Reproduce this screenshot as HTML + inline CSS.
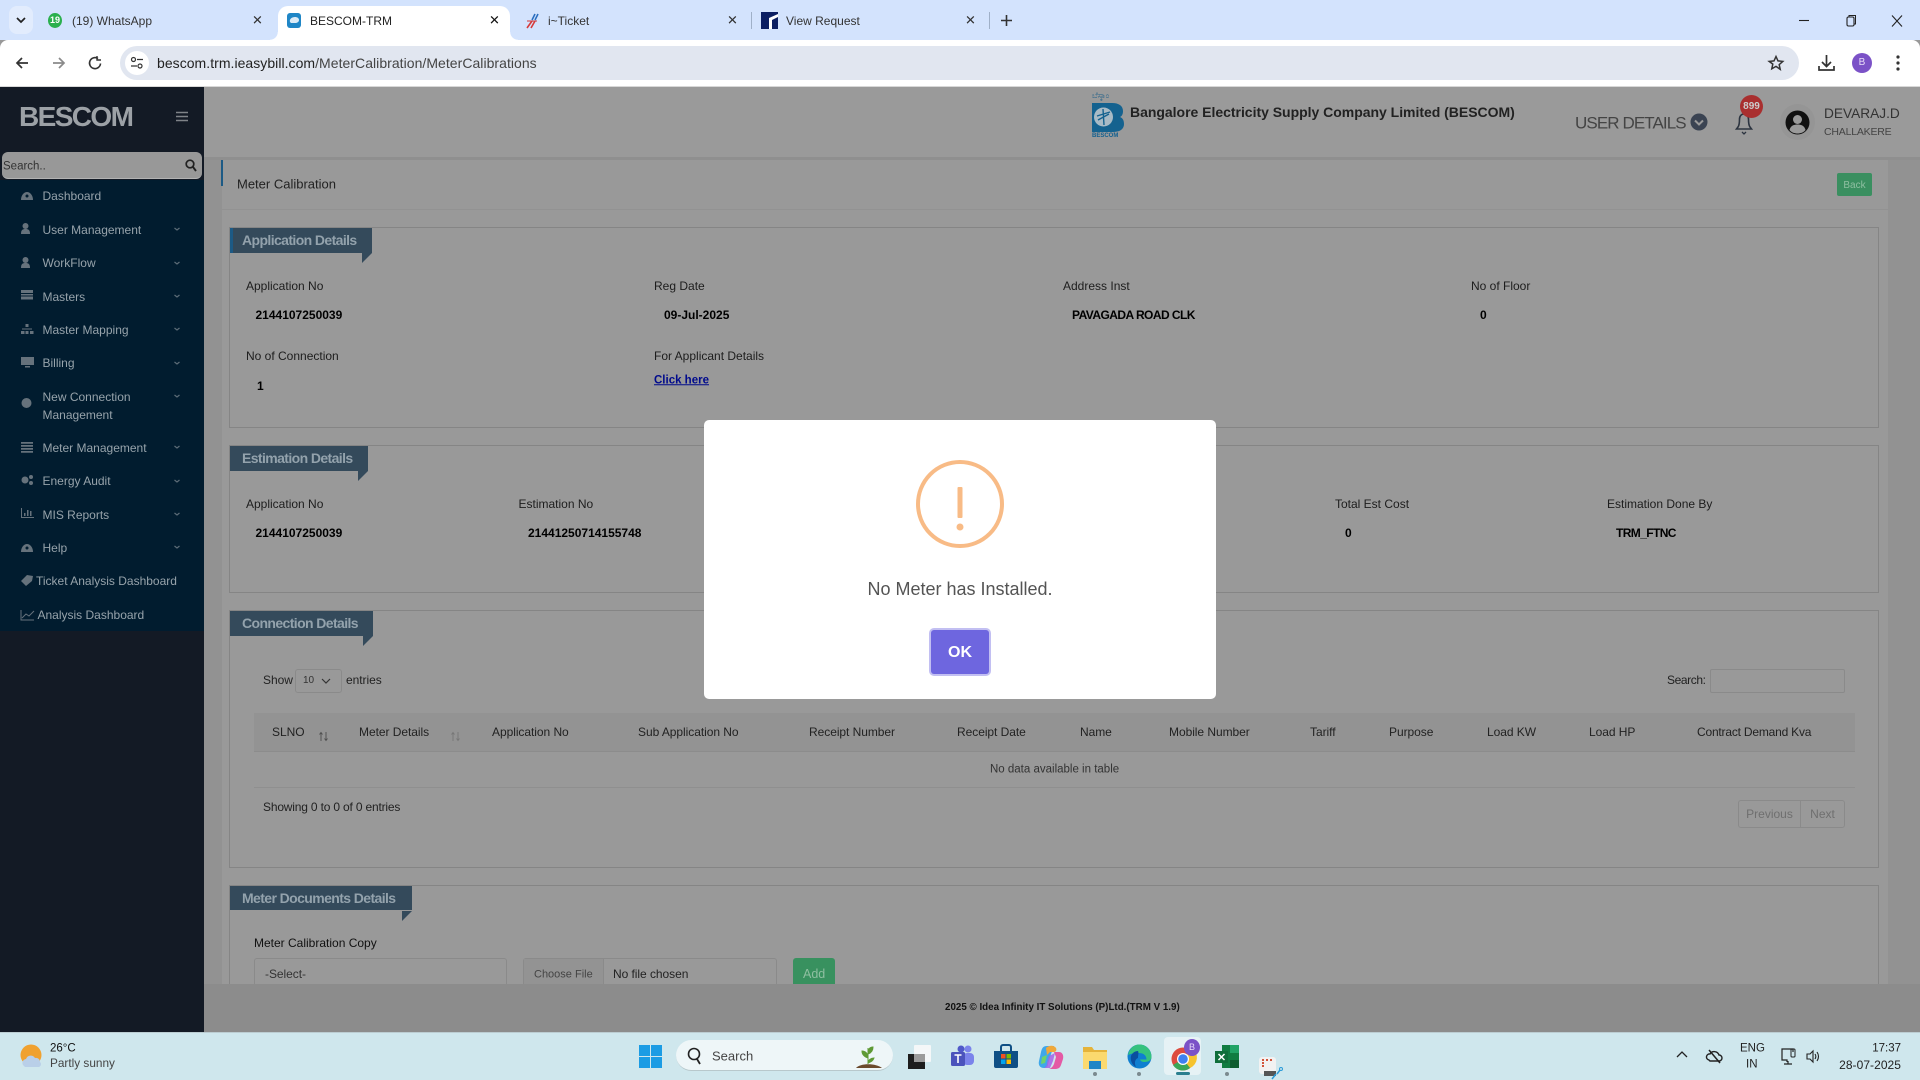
<!DOCTYPE html>
<html lang="en"><head><meta charset="utf-8"><title>BESCOM-TRM</title>
<style>
*{box-sizing:border-box}
html,body{margin:0;padding:0;width:1920px;height:1080px;overflow:hidden;background:#999;font-family:"Liberation Sans",sans-serif}
.b{position:absolute}
.t{position:absolute;white-space:nowrap;line-height:1;transform:translateY(-50%);font-size:12px;color:#1c1c1c}
svg{position:absolute;overflow:visible}
.tab{font-size:12px;color:#333}
.x{font-size:13px;color:#333}
.nav{font-size:12px;color:#97a3ab}
.lab{font-size:12px;color:#1d1d1d}
.val{font-size:12px;font-weight:bold;color:#000}
.card{position:absolute;left:229px;width:1650px;border:1px solid #858585}
.rib{position:absolute;left:230px;background:#344a5b}
.rt{position:absolute;white-space:nowrap;line-height:1;transform:translateY(-50%);font-size:14px;font-weight:bold;color:#93a2ac;letter-spacing:-.6px;left:242px}
.th{font-size:12px;color:#222;letter-spacing:-.05px}
.fold{position:absolute;width:0;height:0;border-style:solid;border-width:10px 10px 0 0;border-color:#344a5b transparent transparent transparent}
</style></head><body>

<!-- browser chrome -->
<div class="b" style="left:0;top:0;width:1920px;height:40px;background:#d3e3fd"></div>
<div class="b" style="left:9px;top:6px;width:24px;height:28px;background:#e2ecfd;border-radius:8px"></div>
<svg style="left:14px;top:16px" width="14" height="9"><path d="M3 2l4 4 4-4" fill="none" stroke="#222" stroke-width="1.7"/></svg>
<div class="b" style="left:48px;top:13px;width:14px;height:15px;border-radius:50%;background:#2bb04e;color:#fff;font-size:9px;font-weight:bold;line-height:15px;text-align:center">19</div>
<div class="t tab" style="left:72px;top:21px">(19) WhatsApp</div>
<div class="t x" style="left:252px;top:20px">✕</div>
<div class="b" style="left:278px;top:6px;width:232px;height:34px;background:#fff;border-radius:10px 10px 0 0"></div>
<div class="b" style="left:270px;top:32px;width:8px;height:8px;background:radial-gradient(circle at 0 0,#d3e3fd 7.5px,#fff 8px)"></div>
<div class="b" style="left:510px;top:32px;width:8px;height:8px;background:radial-gradient(circle at 100% 0,#d3e3fd 7.5px,#fff 8px)"></div>
<div class="b" style="left:287px;top:13px;width:14px;height:15px;background:#1f86c6;border-radius:3px"></div>
<svg style="left:288px;top:15px" width="12" height="10"><path d="M2 7c-1-3 2-5 5-5 2 0 4 1 4 3s-2 3-4 3H3z" fill="#dcebf6"/></svg>
<div class="t tab" style="left:310px;top:21px;color:#222">BESCOM-TRM</div>
<div class="t x" style="left:489px;top:20px;color:#111">✕</div>
<svg style="left:525px;top:13px" width="14" height="16"><path d="M10 1L7 7M13 1l-3 6" stroke="#2c6fc0" stroke-width="1.6" fill="none"/><path d="M7 8L2 15M10 8l-4 7" stroke="#d63a3a" stroke-width="1.6" fill="none"/><path d="M2 8h10" stroke="#d63a3a" stroke-width="1"/></svg>
<div class="t tab" style="left:548px;top:21px">i~Ticket</div>
<div class="t x" style="left:727px;top:20px">✕</div>
<div class="b" style="left:751px;top:12px;width:1px;height:17px;background:#9fb0c8"></div>
<svg style="left:761px;top:12px" width="17" height="17"><rect width="17" height="17" fill="#0c1f63"/><path d="M8 17V6l9-4v3l-6 3v9z" fill="#fff"/></svg>
<div class="t tab" style="left:786px;top:21px">View Request</div>
<div class="t x" style="left:965px;top:20px">✕</div>
<div class="b" style="left:989px;top:12px;width:1px;height:17px;background:#9fb0c8"></div>
<svg style="left:1000px;top:14px" width="13" height="13"><path d="M6.5 1v11M1 6.5h11" stroke="#333" stroke-width="1.6"/></svg>
<svg style="left:1798px;top:14px" width="110" height="14"><path d="M1 6.5h10" stroke="#222" stroke-width="1.1"/><rect x="49" y="3" width="7" height="9" rx="1.5" fill="none" stroke="#222" stroke-width="1.1"/><path d="M51 3V1.5h6.500V10H56" fill="none" stroke="#222" stroke-width="1"/><path d="M94 1.5l10 11M104 1.5l-10 11" stroke="#222" stroke-width="1.1"/></svg>

<div class="b" style="left:0;top:40px;width:1920px;height:47px;background:#fff;border-radius:8px 8px 0 0"></div>
<div class="b" style="left:0;top:86px;width:1920px;height:1px;background:#d8d8d8"></div>
<div class="b" style="left:120px;top:46px;width:1679px;height:34px;background:#e1e6f0;border-radius:17px"></div>
<svg style="left:14px;top:55px" width="100" height="16"><path d="M14 8H3M8 3L3 8l5 5" fill="none" stroke="#333" stroke-width="1.7"/><path d="M39 8h11M45 3l5 5-5 5" fill="none" stroke="#8a8a8a" stroke-width="1.7"/><path d="M84 3.500a5.500 5.500 0 1 0 2.500 5" fill="none" stroke="#333" stroke-width="1.6"/><path d="M83 1v4h4" fill="none" stroke="#333" stroke-width="1.4"/></svg>
<div class="b" style="left:125px;top:51px;width:24px;height:24px;background:#fff;border-radius:50%"></div>
<svg style="left:130px;top:56px" width="14" height="14"><circle cx="3.5" cy="3.5" r="2" fill="none" stroke="#333" stroke-width="1.2"/><path d="M7 3.5h6M1 10h6" stroke="#333" stroke-width="1.3"/><circle cx="10" cy="10" r="2" fill="none" stroke="#333" stroke-width="1.2"/></svg>
<div class="t" style="left:157px;top:63px;font-size:14px;color:#222;letter-spacing:.04px">bescom.trm.ieasybill.com<span style="color:#444">/MeterCalibration/MeterCalibrations</span></div>
<svg style="left:1768px;top:55px" width="16" height="16"><path d="M8 1.5l2 4.4 4.8.5-3.6 3.2 1 4.7L8 11.4l-4.200 2.400 1-4.700L1.200 6.400 6 5.900z" fill="none" stroke="#333" stroke-width="1.5"/></svg>
<svg style="left:1818px;top:54px" width="17" height="18"><path d="M8.500 1v11M4 8l4.500 4.500L13 8" fill="none" stroke="#333" stroke-width="1.7"/><path d="M1 12v4h15v-4" fill="none" stroke="#333" stroke-width="1.7"/></svg>
<div class="b" style="left:1852px;top:53px;width:20px;height:20px;border-radius:50%;background:#7b52c7;color:#e8dcf8;font-size:10px;line-height:20px;text-align:center">B</div>
<svg style="left:1896px;top:55px" width="4" height="16"><circle cx="2" cy="2" r="1.600" fill="#333"/><circle cx="2" cy="8" r="1.600" fill="#333"/><circle cx="2" cy="14" r="1.600" fill="#333"/></svg>

<!-- sidebar -->
<div class="b" style="left:0;top:87px;width:204px;height:945px;background:#131a25"></div>
<div class="b" style="left:0;top:180px;width:204px;height:451px;background:#011c2f"></div>
<div class="t" style="left:19px;top:117px;font-size:28px;font-weight:bold;color:#9ca1a6;letter-spacing:-1.600px">BESCOM</div>
<svg style="left:176px;top:111px" width="12" height="11"><path d="M0 1.500h12M0 5.500h12M0 9.500h12" stroke="#7f8388" stroke-width="1.600"/></svg>
<div class="b" style="left:2px;top:152px;width:200px;height:27px;background:#989898;border-radius:6px;border-bottom:1px solid #b3b3b3"></div>
<div class="t" style="left:3px;top:166px;font-size:11.500px;color:#333;margin-top:1px">Search..</div>
<svg style="left:185px;top:159px" width="12" height="13"><circle cx="5" cy="5" r="3.800" fill="none" stroke="#222" stroke-width="1.700"/><path d="M8 8l3 4" stroke="#222" stroke-width="1.900"/></svg>

<div class="t nav" style="left:42.500px;top:196px">Dashboard</div>
<div class="t nav" style="left:42.500px;top:230px">User Management</div>
<div class="t nav" style="left:42.500px;top:263px">WorkFlow</div>
<div class="t nav" style="left:42.500px;top:297px">Masters</div>
<div class="t nav" style="left:42.500px;top:330px">Master Mapping</div>
<div class="t nav" style="left:42.500px;top:363px">Billing</div>
<div class="t nav" style="left:42.500px;top:397px">New Connection</div>
<div class="t nav" style="left:42.500px;top:415px">Management</div>
<div class="t nav" style="left:42.500px;top:448px">Meter Management</div>
<div class="t nav" style="left:42.500px;top:481px">Energy Audit</div>
<div class="t nav" style="left:42.500px;top:515px">MIS Reports</div>
<div class="t nav" style="left:42.500px;top:548px">Help</div>
<div class="t nav" style="left:36px;top:581px">Ticket Analysis Dashboard</div>
<div class="t nav" style="left:37.500px;top:615px">Analysis Dashboard</div>

<svg style="left:0;top:180px" width="204" height="450" fill="none" stroke="#5d6c78">
<g stroke-width="1.200"><path d="M174.500 48l2.500 2 2.500-2M174.500 82l2.500 2 2.500-2M174.500 115l2.500 2 2.500-2M174.500 148l2.500 2 2.500-2M174.500 182l2.500 2 2.500-2M174.500 215l2.500 2 2.500-2M174.500 266l2.500 2 2.500-2M174.500 300l2.500 2 2.500-2M174.500 333l2.500 2 2.500-2M174.500 366l2.500 2 2.500-2"/></g>
<g fill="#66727c" stroke="none">
<path d="M21 20a6 8 0 0 1 12 0z"/><circle cx="27" cy="16" r="1.500" fill="#011c2f"/>
<circle cx="25.500" cy="46" r="3"/><path d="M21 54c0-4 1.500-5 4.500-5s4.500 1 4.500 5z"/>
<circle cx="25.500" cy="80" r="3"/><path d="M21 88c0-4 1.500-5 4.500-5s4.500 1 4.500 5z"/>
<path d="M21 110h12v3H21zM21 114h12v1.500H21zM21 116.500h12v3H21z"/>
<path d="M25.500 144h3v3h-3zM21 151h3.500v3H21zM25.500 151h3v3h-3zM30 151h3.500v3H30zM22 148.500h10v1h-10z"/>
<path d="M21 177h13v8H21zM25 186h5v1.500h-5z"/>
<circle cx="26.500" cy="223" r="5"/>
<path d="M21 262h12v1.800H21zM21 265h12v1.800H21zM21 268h12v1.800H21zM21 271h12v1.800H21z"/>
<circle cx="25" cy="300" r="3.500"/><circle cx="31" cy="297" r="2"/><circle cx="31" cy="303" r="2"/>
<path d="M21 328h1v9h12v1H21zM24 333h1.500v3H24zM27 330h1.500v6H27zM30 331h1.500v5H30z"/>
<path d="M21 372a6 8 0 0 1 12 0z"/><circle cx="27" cy="368" r="1.500" fill="#011c2f"/>
<path d="M21 401l6-6 6 1-1 5-6 5z"/>
</g>
<path d="M21 430v10h13M22 438l4-4 3 2 5-5" stroke-width="1" stroke="#66727c"/>
</svg>

<!-- main -->
<div class="b" style="left:204px;top:87px;width:1716px;height:70px;background:#9a9a9a"></div>
<div class="b" style="left:204px;top:157px;width:1716px;height:3px;background:#8f8f8f"></div>
<div class="b" style="left:204px;top:160px;width:1716px;height:824px;background:#929292"></div>
<div class="b" style="left:222px;top:160px;width:1666px;height:824px;background:#999"></div>
<div class="b" style="left:221px;top:160px;width:2px;height:26px;background:#1c5a85"></div>
<div class="b" style="left:222px;top:209px;width:1666px;height:1px;background:#929292"></div>

<!-- header -->
<svg style="left:1092px;top:103px" width="33" height="30"><path d="M0 0h20c7 0 11 3 11 8 0 3-1 5-3 6 3 1 4 4 4 7 0 5-4 8-11 8H0z" fill="#15628f"/><circle cx="11.500" cy="14" r="9.500" fill="#a9bbc6"/><path d="M11 6l1 16M5 13l13-4M6 17l11-6" stroke="#15628f" stroke-width="1.400" fill="none"/></svg>
<div class="t" style="left:1092px;top:96px;font-size:8px;color:#1e5f88;font-family:'Liberation Sans','DejaVu Sans',sans-serif">ಬೆಸ್ಕಾಂ</div>
<div class="t" style="left:1092px;top:136px;font-size:6px;font-weight:bold;color:#13608f">BESCOM</div>
<div class="t" style="left:1130px;top:112px;font-size:14px;font-weight:bold;color:#222;letter-spacing:-.02px">Bangalore Electricity Supply Company Limited (BESCOM)</div>
<div class="t" style="left:1575px;top:123px;font-size:17px;color:#444;letter-spacing:-.9px">USER DETAILS</div>
<svg style="left:1690px;top:113px" width="18" height="18"><circle cx="9" cy="9" r="8.500" fill="#3a4352"/><path d="M5 7.500l4 4 4-4" fill="none" stroke="#9a9a9a" stroke-width="2"/></svg>
<svg style="left:1734px;top:110px" width="20" height="26"><path d="M4 17c1.500-2 1.500-5 1.500-8 0-3 2-5 4.500-5s4.500 2 4.500 5c0 3 0 6 1.500 8l1.500 2H2.500z" fill="none" stroke="#2c3440" stroke-width="1.600"/><path d="M8 22l2 2 2-2" fill="none" stroke="#2c3440" stroke-width="1.300"/></svg>
<div class="b" style="left:1740px;top:95px;width:23px;height:23px;background:#a92f2f;border-radius:50%;color:#ccc;font-size:10px;font-weight:bold;line-height:23px;text-align:center">899</div>
<div class="b" style="left:1780px;top:104px;width:35px;height:36px;background:#959595;border-radius:50%"></div>
<svg style="left:1785px;top:110px" width="25" height="25"><circle cx="12.500" cy="12.500" r="12" fill="#111"/><circle cx="12.500" cy="9.500" r="4.500" fill="#9a9a9a"/><path d="M4.500 20c1-4 4-5.500 8-5.500s7 1.500 8 5.500c-2 2.500-5 3.500-8 3.500s-6-1-8-3.500z" fill="#9a9a9a"/></svg>
<div class="t" style="left:1824px;top:114px;font-size:13.700px;color:#333">DEVARAJ.D</div>
<div class="t" style="left:1824px;top:132px;font-size:10.500px;color:#444;letter-spacing:-.2px">CHALLAKERE</div>

<div class="t" style="left:237px;top:184px;font-size:13px;color:#222">Meter Calibration</div>
<div class="b" style="left:1837px;top:173px;width:35px;height:23px;background:#3a8f60;border-radius:2px;color:#8fbfa1;font-size:10px;line-height:25px;text-align:center">Back</div>

<!-- Application -->
<div class="card" style="top:227px;height:201px"></div>
<div class="rib" style="top:228px;width:142px;height:25px;border-left:3px solid #1c5a85"></div>
<div class="fold" style="left:362px;top:253px"></div>
<div class="rt" style="top:240px">Application Details</div>
<div class="t lab" style="left:246px;top:286px">Application No</div>
<div class="t val" style="left:255.500px;top:315px">2144107250039</div>
<div class="t lab" style="left:654px;top:286px">Reg Date</div>
<div class="t val" style="left:664px;top:315px">09-Jul-2025</div>
<div class="t lab" style="left:1063px;top:286px">Address Inst</div>
<div class="t val" style="left:1072px;top:315px;letter-spacing:-.55px">PAVAGADA ROAD CLK</div>
<div class="t lab" style="left:1471px;top:286px">No of Floor</div>
<div class="t val" style="left:1480px;top:315px">0</div>
<div class="t lab" style="left:246px;top:356px">No of Connection</div>
<div class="t val" style="left:257px;top:386px">1</div>
<div class="t lab" style="left:654px;top:356px">For Applicant Details</div>
<div class="t" style="left:654px;top:381px;font-size:11.500px;font-weight:bold;color:#000a8c;text-decoration:underline">Click here</div>

<!-- Estimation -->
<div class="card" style="top:445px;height:148px"></div>
<div class="rib" style="top:446px;width:138px;height:25px"></div>
<div class="fold" style="left:358px;top:471px"></div>
<div class="rt" style="top:458px">Estimation Details</div>
<div class="t lab" style="left:246px;top:504px">Application No</div>
<div class="t val" style="left:255.500px;top:533px">2144107250039</div>
<div class="t lab" style="left:518.500px;top:504px">Estimation No</div>
<div class="t val" style="left:528px;top:533px">21441250714155748</div>
<div class="t lab" style="left:1335px;top:504px">Total Est Cost</div>
<div class="t val" style="left:1345px;top:533px">0</div>
<div class="t lab" style="left:1607px;top:504px">Estimation Done By</div>
<div class="t val" style="left:1616px;top:533px;letter-spacing:-.6px">TRM_FTNC</div>

<!-- Connection -->
<div class="card" style="top:610px;height:258px"></div>
<div class="rib" style="top:611px;width:143px;height:25px"></div>
<div class="fold" style="left:363px;top:636px"></div>
<div class="rt" style="top:623px">Connection Details</div>
<div class="t th" style="left:263px;top:680px">Show</div>
<div class="b" style="left:295px;top:669px;width:47px;height:24px;border:1px solid #8a8a8a;border-radius:3px"></div>
<div class="t" style="left:303px;top:681px;font-size:10px;color:#333">10</div>
<svg style="left:321px;top:678px" width="10" height="7"><path d="M1 1l4 4 4-4" fill="none" stroke="#333" stroke-width="1.200"/></svg>
<div class="t th" style="left:346px;top:680px">entries</div>
<div class="t th" style="left:1667px;top:680px;letter-spacing:-.4px">Search:</div>
<div class="b" style="left:1710px;top:669px;width:135px;height:24px;border:1px solid #8a8a8a;border-radius:2px"></div>
<div class="b" style="left:254px;top:713px;width:1601px;height:38px;background:#939393"></div>
<div class="b" style="left:254px;top:751px;width:1601px;height:1px;background:#8c8c8c"></div>
<div class="t th" style="left:272px;top:732px">SLNO</div>
<svg style="left:318px;top:731px" width="12" height="11"><path d="M3 10V2M1.500 3.500L3 1.500l1.500 2M8 1v8M6.500 7.500L8 9.500l1.500-2" fill="none" stroke="#4f4f4f" stroke-width=".9"/></svg>
<div class="t th" style="left:359px;top:732px">Meter Details</div>
<svg style="left:450px;top:731px" width="12" height="11"><path d="M3 10V2M1.500 3.500L3 1.500l1.500 2M8 1v8M6.500 7.500L8 9.500l1.500-2" fill="none" stroke="#777" stroke-width=".9"/></svg>
<div class="t th" style="left:492px;top:732px">Application No</div>
<div class="t th" style="left:638px;top:732px">Sub Application No</div>
<div class="t th" style="left:809px;top:732px">Receipt Number</div>
<div class="t th" style="left:957px;top:732px">Receipt Date</div>
<div class="t th" style="left:1080px;top:732px">Name</div>
<div class="t th" style="left:1169px;top:732px">Mobile Number</div>
<div class="t th" style="left:1310px;top:732px">Tariff</div>
<div class="t th" style="left:1389px;top:732px">Purpose</div>
<div class="t th" style="left:1487px;top:732px">Load KW</div>
<div class="t th" style="left:1589px;top:732px">Load HP</div>
<div class="t th" style="left:1697px;top:732px;letter-spacing:-.2px">Contract Demand Kva</div>
<div class="t" style="left:990px;top:770px;font-size:11.500px;color:#333">No data available in table</div>
<div class="b" style="left:254px;top:787px;width:1601px;height:1px;background:#8f8f8f"></div>
<div class="t th" style="left:263px;top:807px;letter-spacing:-.18px">Showing 0 to 0 of 0 entries</div>
<div class="b" style="left:1738px;top:800px;width:63px;height:28px;border:1px solid #8a8a8a;border-radius:3px 0 0 3px;color:#6f6f6f;font-size:12px;line-height:26px;text-align:center">Previous</div>
<div class="b" style="left:1800px;top:800px;width:45px;height:28px;border:1px solid #8a8a8a;border-radius:0 3px 3px 0;color:#6f6f6f;font-size:12px;line-height:26px;text-align:center">Next</div>

<!-- Documents -->
<div class="card" style="top:885px;height:140px"></div>
<div class="rib" style="top:886px;width:182px;height:24px"></div>
<div class="fold" style="left:402px;top:911px"></div>
<div class="rt" style="top:898px">Meter Documents Details</div>
<div class="t lab" style="left:254px;top:943px;color:#111">Meter Calibration Copy</div>
<div class="b" style="left:254px;top:958px;width:253px;height:40px;border:1px solid #8a8a8a;border-radius:3px"></div>
<div class="t th" style="left:265px;top:974px;color:#333">-Select-</div>
<div class="b" style="left:523px;top:958px;width:254px;height:40px;border:1px solid #8a8a8a;border-radius:3px"></div>
<div class="b" style="left:524px;top:959px;width:80px;height:30px;background:#939393;border-right:1px solid #8a8a8a"></div>
<div class="t" style="left:534px;top:975px;color:#444;font-size:11px">Choose File</div>
<div class="t th" style="left:613px;top:974px">No file chosen</div>
<div class="b" style="left:793px;top:958px;width:42px;height:40px;background:#38915f;border-radius:3px"></div>
<div class="t" style="left:803px;top:974px;font-size:12.500px;color:#8fbfa1">Add</div>

<!-- footer -->
<div class="b" style="left:204px;top:984px;width:1716px;height:48px;background:#8c8c8c"></div>
<div class="t" style="left:945px;top:1008px;font-size:9.800px;font-weight:bold;color:#111">2025 © Idea Infinity IT Solutions (P)Ltd.(TRM V 1.9)</div>

<!-- modal -->
<div class="b" style="left:704px;top:420px;width:512px;height:279px;background:#fff;border-radius:5px"></div>
<svg style="left:916px;top:460px" width="88" height="88"><circle cx="44" cy="44" r="42" fill="none" stroke="#f8bb86" stroke-width="4"/><rect x="41.500" y="27" width="5" height="31" rx="1" fill="#f8bb86"/><circle cx="44" cy="67" r="3.500" fill="#f8bb86"/></svg>
<div class="t" style="left:704px;width:512px;text-align:center;top:589px;font-size:18px;color:#545454">No Meter has Installed.</div>
<div class="b" style="left:931px;top:630px;width:58px;height:44px;background:#6e66df;border-radius:3px;box-shadow:0 0 0 2px #c2bff2;color:#fff;font-size:16px;font-weight:bold;line-height:45px;text-align:center">OK</div>

<!-- taskbar -->
<div class="b" style="left:0;top:1032px;width:1920px;height:48px;background:#cfe7ed;border-top:1px solid #bccdd2"></div>
<svg style="left:20px;top:1044px" width="26" height="26"><circle cx="11" cy="11" r="10.500" fill="#f0a12f"/><path d="M3 21a4 4 0 0 1 3-6 5 5 0 0 1 9-1 4 4 0 0 1 5 4 3 3 0 0 1-1 5H5z" fill="#b9cfe8"/></svg>
<div class="t" style="left:50px;top:1049px;font-size:11.500px;color:#111">26°C</div>
<div class="t" style="left:50px;top:1064px;font-size:11.800px;color:#444">Partly sunny</div>
<svg style="left:639px;top:1045px" width="23" height="23"><path d="M0 0h11v11H0zM12 0h11v11H12zM0 12h11v11H0zM12 12h11v11H12z" fill="#1b9ce4"/></svg>
<div class="b" style="left:676px;top:1040px;width:217px;height:31px;background:#eef6f8;border-radius:16px;border-bottom:1px solid #b8c8cc"></div>
<svg style="left:687px;top:1047px" width="16" height="18"><circle cx="7" cy="7" r="5.500" fill="none" stroke="#222" stroke-width="1.600"/><path d="M10 12l3 5" stroke="#222" stroke-width="1.800"/></svg>
<div class="t" style="left:712px;top:1056px;font-size:13px;color:#444">Search</div>
<svg style="left:850px;top:1044px" width="36" height="26"><path d="M18 20V4M18 14c-3-1-6-3-6-7 3 0 6 2 6 7zM18 10c3-1 5-3 5-7-3 0-5 2-5 7zM18 19c3-1 5-2 6-5-3 0-6 2-6 5z" fill="#5f9a35" stroke="#5f9a35"/><path d="M6 24c4-5 20-5 26 0z" fill="#6b4a2d"/></svg>
<svg style="left:908px;top:1045px" width="24" height="24"><rect x="0" y="9" width="17" height="15" fill="#1d1d1d"/><rect x="6" y="0" width="17" height="17" rx="1" fill="#f4f7f8"/><rect x="6" y="9" width="11" height="8" fill="#9b9b9b"/></svg>
<svg style="left:951px;top:1045px" width="24" height="24"><circle cx="17" cy="4" r="3.500" fill="#7b83eb"/><rect x="12" y="8" width="11" height="12" rx="4" fill="#7b83eb"/><circle cx="10" cy="4" r="3.500" fill="#5059c9"/><rect x="0" y="7" width="14" height="14" rx="1.500" fill="#4b53bc"/><path d="M3.500 10h7M7 10v8" stroke="#fff" stroke-width="1.600"/></svg>
<svg style="left:994px;top:1044px" width="24" height="25"><path d="M0 7h24v15a2 2 0 0 1-2 2H2a2 2 0 0 1-2-2z" fill="#0f4f85"/><path d="M7 7V3a2 2 0 0 1 2-2h6a2 2 0 0 1 2 2v4" fill="none" stroke="#0f4f85" stroke-width="2"/><rect x="7" y="10" width="4.500" height="4.500" fill="#f25022"/><rect x="12.500" y="10" width="4.500" height="4.500" fill="#7fba00"/><rect x="7" y="15.500" width="4.500" height="4.500" fill="#00a4ef"/><rect x="12.500" y="15.500" width="4.500" height="4.500" fill="#ffb900"/></svg>
<svg style="left:1039px;top:1045px" width="25" height="24"><path d="M8 1c-4 0-5 2-6 6L0 16c-1 4 1 7 5 7 2 0 4-1 4-4l3-10 3-8z" fill="#3fa7ea"/><path d="M7 3c3-3 8-3 10 0 1 2 0 4-2 4h-4l-3 3z" fill="#f0a83a"/><path d="M15 7h5c3 0 5 3 4 7l-2 6c-1 3-3 4-6 4h-6c3-1 4-3 5-5l2-7z" fill="#e45aa5"/><path d="M10 11l6-3-2 8-3 7-6 0c2-1 3-3 3-5z" fill="#a563e8" opacity=".85"/><path d="M3 12l5-2-2 8-4 1z" fill="#6fd26c"/></svg>
<svg style="left:1083px;top:1045px" width="24" height="24"><path d="M0 2h9l2 3h13v19H0z" fill="#e5b33a"/><path d="M0 7h24v17H0z" fill="#fbd96e"/><rect x="6" y="16" width="12" height="8" fill="#1f86c6"/></svg>
<svg style="left:1127px;top:1044px" width="25" height="25"><circle cx="12.500" cy="12.500" r="12" fill="#0f7fd0"/><path d="M1 11C3 3 8 .5 12.500.5 19 .5 24.500 6 24.500 13c0 3-3 5-7 5-2.500 0-4-1-4.500-2.500h6.500c0-4-3-6.500-7.500-6.500-4 0-8 .5-11 2z" fill="#35c27e"/><path d="M11 7c-3 0-6 2-7 5-1 4 1 9 5 11-2-4-1-8 2-9 0-3 1-5 0-7z" fill="#0a4f9f"/></svg>
<div class="b" style="left:1164px;top:1037px;width:37px;height:38px;background:#e6f2f5;border-radius:4px"></div>
<svg style="left:1171px;top:1047px" width="26" height="26"><circle cx="12" cy="12" r="11.500" fill="#dd4c3f"/><path d="M12 12L21 1a11.500 11.500 0 0 1-2 20z" fill="#f6c32e"/><path d="M12 12l7 9A11.500 11.500 0 0 1 2 18z" fill="#3aa757"/><circle cx="12" cy="12" r="6" fill="#fff"/><circle cx="12" cy="12" r="4.800" fill="#3e80f0"/></svg>
<div class="b" style="left:1184px;top:1039px;width:16px;height:17px;border-radius:50%;background:#7b52c7;color:#e8dcf8;font-size:9px;line-height:17px;text-align:center">B</div>
<div class="b" style="left:1176px;top:1072px;width:14px;height:3px;border-radius:2px;background:#2a7f8f"></div>
<svg style="left:1215px;top:1045px" width="24" height="24"><rect x="7" y="0" width="17" height="23" fill="#107c41"/><rect x="15" y="0" width="9" height="8" fill="#21a366"/><rect x="15" y="15" width="9" height="8" fill="#0e5c2f"/><rect x="0" y="6" width="13" height="12" fill="#0f6e3a"/><path d="M3.500 9l6 6M9.500 9l-6 6" stroke="#fff" stroke-width="1.500"/></svg>
<svg style="left:1258px;top:1056px" width="26" height="24"><rect x="1" y="1" width="17" height="17" rx="3" fill="#f2f2f2"/><path d="M4 4h2M8 4h2M12 4h2M4 7h2M4 10h2" stroke="#d2543a" stroke-width="2"/><rect x="6" y="15" width="12" height="5" fill="#555"/><path d="M14 23l4-5M22 14l-3 4" stroke="#2b9bd8" stroke-width="1.500"/><circle cx="23" cy="13" r="1.500" fill="none" stroke="#2b9bd8"/></svg>
<div class="b" style="left:1093px;top:1072px;width:4px;height:4px;border-radius:50%;background:#7b8a8f"></div>
<div class="b" style="left:1137px;top:1072px;width:4px;height:4px;border-radius:50%;background:#7b8a8f"></div>
<div class="b" style="left:1225px;top:1072px;width:4px;height:4px;border-radius:50%;background:#7b8a8f"></div>
<svg style="left:1676px;top:1050px" width="12" height="8"><path d="M1 7l5-5 5 5" fill="none" stroke="#222" stroke-width="1.300"/></svg>
<svg style="left:1706px;top:1048px" width="17" height="17"><path d="M3 12a3 3 0 0 1 1-6 5 5 0 0 1 9 1 3 3 0 0 1 0 6H4z" fill="none" stroke="#222" stroke-width="1.400"/><path d="M3 2l11 13" stroke="#222" stroke-width="1.500"/></svg>
<div class="t" style="left:1740px;top:1049px;font-size:11.500px;color:#222">ENG</div>
<div class="t" style="left:1746px;top:1065px;font-size:11.500px;color:#222">IN</div>
<svg style="left:1781px;top:1047px" width="44" height="20"><path d="M12 5V2H1v11h5v2M3 17h8M7 14v3" fill="none" stroke="#222" stroke-width="1.200"/><rect x="10" y="2" width="4" height="8" rx="1" fill="none" stroke="#222"/><path d="M26 7h3l3-3v11l-3-3h-3z" fill="none" stroke="#222" stroke-width="1.100"/><path d="M34 7c1 1.500 1 3.500 0 5M36 5c2 3 2 6 0 9" fill="none" stroke="#222" stroke-width="1.100"/></svg>
<div class="t" style="right:19px;top:1049px;font-size:11.500px;color:#222">17:37</div>
<div class="t" style="right:19px;top:1065px;font-size:12px;color:#222;letter-spacing:.05px">28-07-2025</div>
</body></html>
